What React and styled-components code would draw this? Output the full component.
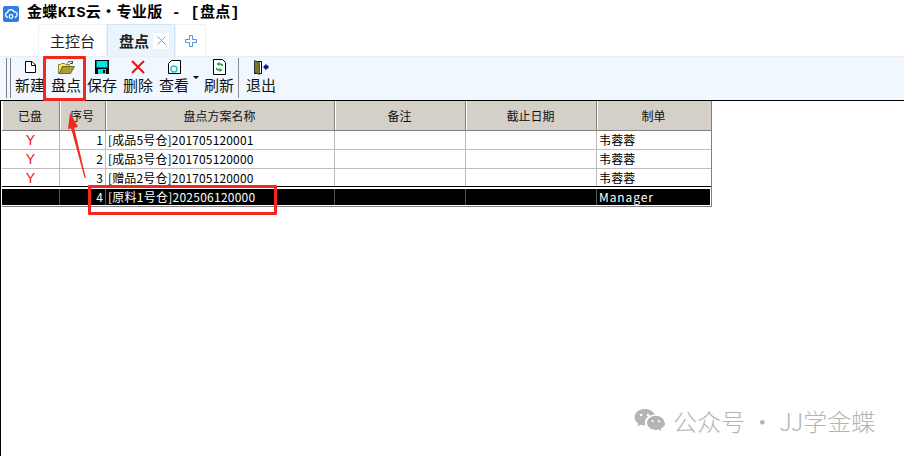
import { Fragment } from "react";
import styled, { createGlobalStyle } from "styled-components";

const cjk = `"Noto Sans CJK SC", "Liberation Sans", sans-serif`;
const columns = "58px 46px 229px 131px 131px 114px";

const GlobalStyle = createGlobalStyle`
  html, body { margin: 0; padding: 0; background: #fff; }
  body { font-family: ${cjk}; color: #000; }
`;

const Page = styled.div`
  position: relative;
  width: 904px;
  height: 456px;
  overflow: hidden;
  background: #fff;
`;

const TitleBar = styled.div`
  box-sizing: border-box;
  height: 24px;
  display: flex;
  align-items: center;
  gap: 8px;
  padding: 3px 0 0 3px;
`;

const TitleText = styled.span`
  font-family: "Liberation Mono", ${cjk};
  font-size: 15px;
  font-weight: 700;
  line-height: 21px;
  letter-spacing: 0.35px;
  white-space: pre;
`;

const TabRow = styled.div`
  height: 32px;
  display: flex;
  padding-left: 38px;
  border-bottom: 1px solid #e8eef5;
`;

const Tab = styled.div`
  box-sizing: border-box;
  width: ${(p) => p.$width}px;
  height: 32px;
  display: flex;
  align-items: center;
  justify-content: ${(p) => (p.$active ? "flex-start" : "center")};
  padding-left: ${(p) => (p.$active ? "11px" : "0")};
  font-size: 15px;
  font-weight: ${(p) => (p.$active ? 700 : 400)};
  color: #222;
  background: ${(p) => (p.$active ? "#eaf4fd" : "#fff")};
  border: 1px solid ${(p) => (p.$active ? "#cfe4f5" : "#edf2f7")};
  border-bottom: none;
`;

const CloseMark = styled.span`
  width: 16px;
  height: 16px;
  margin-left: 4px;
  display: flex;
  align-items: center;
  justify-content: center;
  background: #fff;
`;

const Toolbar = styled.div`
  height: 43px;
  display: flex;
  align-items: stretch;
  padding-left: 6px;
  background: #f0f7ff;
`;

const Grip = styled.div`
  box-sizing: border-box;
  width: 5px;
  margin: 1px 4px 2px 0;
  border-left: 1px solid #808080;
  border-right: 1px solid #808080;
`;

const ToolButton = styled.div`
  width: ${(p) => p.$width}px;
  display: flex;
  flex-direction: column;
  align-items: center;
  flex-shrink: 0;
`;

const ToolIcon = styled.div`
  height: 20px;
  margin-bottom: -2px;
  display: flex;
  align-items: center;
  justify-content: center;
`;

const ToolLabel = styled.span`
  font-size: 15px;
  line-height: 20px;
  color: #111;
  white-space: nowrap;
`;

const DropArrow = styled.div`
  width: 0;
  height: 0;
  margin: 19px 1px 0 4px;
  border-left: 3px solid transparent;
  border-right: 3px solid transparent;
  border-top: 3px solid #000;
`;

const Divider = styled.div`
  width: 1px;
  margin: 1px 5px 2px 0;
  background: #8a8f94;
`;

const GridArea = styled.div`
  border-top: 1px solid #000;
  border-left: 1px solid #000;
  height: 355px;
  padding-left: 1px;
`;

const Table = styled.div`
  width: 709px;
  border-right: 1px solid #808080;
  border-bottom: 1px solid #808080;
`;

const HeaderRow = styled.div`
  display: grid;
  grid-template-columns: ${columns};
  height: 29px;
  background: #d4d0c8;
  border-bottom: 1px solid #808080;
`;

const HeaderCell = styled.div`
  display: flex;
  align-items: center;
  justify-content: center;
  padding-right: 2px;
  font-size: 12px;
  color: #111;
  border-right: 1px solid #808080;
  border-left: 1px solid #fff;
  &:last-child { border-right: none; }
`;

const Row = styled.div`
  box-sizing: border-box;
  display: grid;
  grid-template-columns: ${columns};
  height: ${(p) => p.$height}px;
  background: #fff;
  border-bottom: 1px solid ${(p) => p.$line};
`;

const SelectedRow = styled(Row)`
  background: #000;
  color: #fff;
  border: 1px solid #fff;
  border-top-width: 2px;
  margin-left: -1px;
`;

const Cell = styled.div`
  display: flex;
  align-items: center;
  justify-content: ${(p) => p.$align || "flex-start"};
  padding: 0 2px;
  font-size: 12px;
  line-height: 18px;
  letter-spacing: ${(p) => p.$spacing || "0.15px"};
  white-space: nowrap;
  overflow: hidden;
  border-right: 1px solid ${(p) => (p.$selected ? "#555" : "#bdbdbd")};
  &:last-child { border-right: none; }
`;

const DoneMark = styled.span`
  font-family: "Liberation Sans", sans-serif;
  font-size: 14px;
  color: #f01010;
`;

const Annotation = styled.div`
  position: absolute;
  left: ${(p) => p.$x}px;
  top: ${(p) => p.$y}px;
  width: ${(p) => p.$w}px;
  height: ${(p) => p.$h}px;
  box-sizing: border-box;
  border: 3px solid #f5261c;
  border-radius: 1px;
`;

const ArrowLayer = styled.svg`
  position: absolute;
  left: 60px;
  top: 105px;
`;

const Watermark = styled.div`
  position: absolute;
  left: 634px;
  top: 407px;
  display: flex;
  align-items: center;
  gap: 8px;
  color: #b4b4b4;
  font-size: 24px;
  font-weight: 300;
  line-height: 28px;
  white-space: pre;
`;

const AppLogo = () => (
  <svg width="16" height="16" viewBox="0 0 16 16">
    <rect width="16" height="16" rx="2" fill="#2f7fe0" />
    <path d="M5 11.5a2.6 2.6 0 0 1-.4-5.1 3.3 3.3 0 0 1 6.3-.7 2.8 2.8 0 0 1 .8 5.6" fill="none" stroke="#fff" strokeWidth="1.3" />
    <circle cx="8" cy="10.5" r="1.8" fill="none" stroke="#fff" strokeWidth="1.2" />
  </svg>
);

const CloseIcon = () => (
  <svg width="9" height="9" viewBox="0 0 9 9">
    <path d="M0.5 0.5l8 8M8.5 0.5l-8 8" stroke="#9a9a9a" strokeWidth="1" />
  </svg>
);

const PlusIcon = () => (
  <svg width="12" height="12" viewBox="0 0 12 12">
    <path d="M4.5.5h3v4h4v3h-4v4h-3v-4h-4v-3h4z" fill="#fff" stroke="#5a8fe0" strokeWidth="1" />
  </svg>
);

const NewIcon = () => (
  <svg width="11" height="12" viewBox="0 0 11 12">
    <path d="M.5.5h6.5l3.5 3.5v7.5h-10z" fill="#fff" stroke="#000" />
    <path d="M6.5.5v4h4" fill="none" stroke="#000" />
  </svg>
);

const OpenIcon = () => (
  <svg width="17" height="13" viewBox="0 0 17 13">
    <path d="M.5 3.5h2l1-1h3l1 1h4v2h-7l-3 7h-1z" fill="#f4ec70" stroke="#6a6a10" strokeWidth="0.8" />
    <path d="M1.5 12.5l3-7h12l-4 7z" fill="#a8a030" stroke="#55550a" strokeWidth="0.8" />
    <path d="M9 2.5c1-2 3-2.5 5-1.5M14.5 0v2.5h-2.5" fill="none" stroke="#444" strokeWidth="1" />
  </svg>
);

const SaveIcon = () => (
  <svg width="14" height="14" viewBox="0 0 14 14">
    <rect width="14" height="14" fill="#000" />
    <rect x="1.5" y="1" width="11" height="6.5" fill="#00e5e5" />
    <rect x="3" y="9" width="8" height="5" fill="#00e5e5" />
    <rect x="8" y="10" width="2" height="3" fill="#000" />
  </svg>
);

const DeleteIcon = () => (
  <svg width="14" height="14" viewBox="0 0 14 14">
    <path d="M1 1l12 12M13 1L1 13" stroke="#f01010" strokeWidth="2" />
  </svg>
);

const ViewIcon = () => (
  <svg width="13" height="14" viewBox="0 0 13 14">
    <path d="M3.5.5h9v13h-12v-10z" fill="#fff" stroke="#000" />
    <circle cx="6" cy="9" r="3" fill="none" stroke="#19c8d8" strokeWidth="1.5" />
  </svg>
);

const RefreshIcon = () => (
  <svg width="13" height="16" viewBox="0 0 13 16">
    <path d="M.5.5h9l3 3v12h-12z" fill="#fff" stroke="#000" />
    <path d="M6.5 3v4l-3-2zM6.5 13V9l3 2z" fill="#109a30" />
    <path d="M3.5 9c0 1.5 1 2 3 2M9.5 7c0-1.5-1-2-3-2" fill="none" stroke="#109a30" strokeWidth="1.4" />
  </svg>
);

const ExitIcon = () => (
  <svg width="15" height="15" viewBox="0 0 15 15">
    <path d="M.5 1.5h7v12h-7z" fill="#fff" stroke="#000" />
    <path d="M.5.5l5 2v12l-5-2z" fill="#7a7420" stroke="#333" strokeWidth="0.8" />
    <path d="M14.5 5.5v3h-2v2l-3.5-3.5 3.5-3.5v2z" fill="#101090" />
  </svg>
);

const WeChatIcon = () => (
  <svg width="31" height="27" viewBox="0 0 31 27">
    <path d="M10.5 1C5 1 .6 4.6.6 9.2c0 2.6 1.5 4.9 3.7 6.4l-.9 2.9 3.3-1.8c1.2.3 2.5.5 3.8.5h.8c-.3-.9-.4-1.8-.4-2.7 0-4.3 4-7.8 9-7.8h.7C19.6 3.4 15.4 1 10.5 1z" fill="#b4b4b4" />
    <path d="M30.4 14.8c0-4-3.9-7.1-8.6-7.1s-8.7 3.1-8.7 7.1 3.9 7.1 8.7 7.1c1 0 2-.1 3-.4l2.7 1.5-.7-2.5c2.8-1.3 4.6-3.6 4.6-6.2z" fill="#b4b4b4" />
    <circle cx="7" cy="7" r="1.3" fill="#fff" />
    <circle cx="14" cy="7" r="1.3" fill="#fff" />
    <circle cx="18.6" cy="13.2" r="1.1" fill="#fff" />
    <circle cx="25" cy="13.2" r="1.1" fill="#fff" />
  </svg>
);

const tools = [
  { label: "新建", width: 30, icon: <NewIcon /> },
  { label: "盘点", width: 42, icon: <OpenIcon /> },
  { label: "保存", width: 30, icon: <SaveIcon /> },
  { label: "删除", width: 42, icon: <DeleteIcon /> },
  { label: "查看", width: 30, icon: <ViewIcon />, drop: true },
  { label: "刷新", width: 38, icon: <RefreshIcon />, divider: true },
  { label: "退出", width: 34, icon: <ExitIcon /> },
];

const headers = ["已盘", "序号", "盘点方案名称", "备注", "截止日期", "制单"];

const rows = [
  { no: 1, name: "[成品5号仓]201705120001", maker: "韦蓉蓉", height: 19, line: "#bdbdbd" },
  { no: 2, name: "[成品3号仓]201705120000", maker: "韦蓉蓉", height: 19, line: "#bdbdbd" },
  { no: 3, name: "[赠品2号仓]201705120000", maker: "韦蓉蓉", height: 18, line: "#000" },
];

export default function App() {
  return (
    <Page>
      <GlobalStyle />
      <TitleBar>
        <AppLogo />
        <TitleText>金蝶KIS云・专业版 - [盘点]</TitleText>
      </TitleBar>
      <TabRow>
        <Tab $width={69}>主控台</Tab>
        <Tab $width={68} $active>
          盘点
          <CloseMark>
            <CloseIcon />
          </CloseMark>
        </Tab>
        <Tab $width={31}>
          <PlusIcon />
        </Tab>
      </TabRow>
      <Toolbar>
        <Grip />
        {tools.map((t) => (
          <Fragment key={t.label}>
            <ToolButton $width={t.width}>
              <ToolIcon>{t.icon}</ToolIcon>
              <ToolLabel>{t.label}</ToolLabel>
            </ToolButton>
            {t.drop && <DropArrow />}
            {t.divider && <Divider />}
          </Fragment>
        ))}
      </Toolbar>
      <GridArea>
        <Table>
          <HeaderRow>
            {headers.map((h) => (
              <HeaderCell key={h}>{h}</HeaderCell>
            ))}
          </HeaderRow>
          {rows.map((r) => (
            <Row key={r.no} $height={r.height} $line={r.line}>
              <Cell $align="center"><DoneMark>Y</DoneMark></Cell>
              <Cell $align="flex-end">{r.no}</Cell>
              <Cell>{r.name}</Cell>
              <Cell />
              <Cell />
              <Cell>{r.maker}</Cell>
            </Row>
          ))}
          <SelectedRow $height={19} $line="#fff">
            <Cell $selected />
            <Cell $selected $align="flex-end">4</Cell>
            <Cell $selected $spacing="0.25px">[原料1号仓]202506120000</Cell>
            <Cell $selected />
            <Cell $selected />
            <Cell $selected $spacing="0.9px">Manager</Cell>
          </SelectedRow>
        </Table>
      </GridArea>

      <Annotation $x={43} $y={56} $w={43} $h={45} />
      <Annotation $x={88} $y={185} $w={189} $h={30} />
      <ArrowLayer width="30" height="80" viewBox="0 0 30 80">
        <path d="M25.8 73L14 22 11 23 24.6 73z" fill="#f5261c" />
        <path d="M10 8l8 14-10 2z" fill="#f5261c" />
      </ArrowLayer>

      <Watermark>
        <WeChatIcon />
        公众号 · JJ学金蝶
      </Watermark>
    </Page>
  );
}
